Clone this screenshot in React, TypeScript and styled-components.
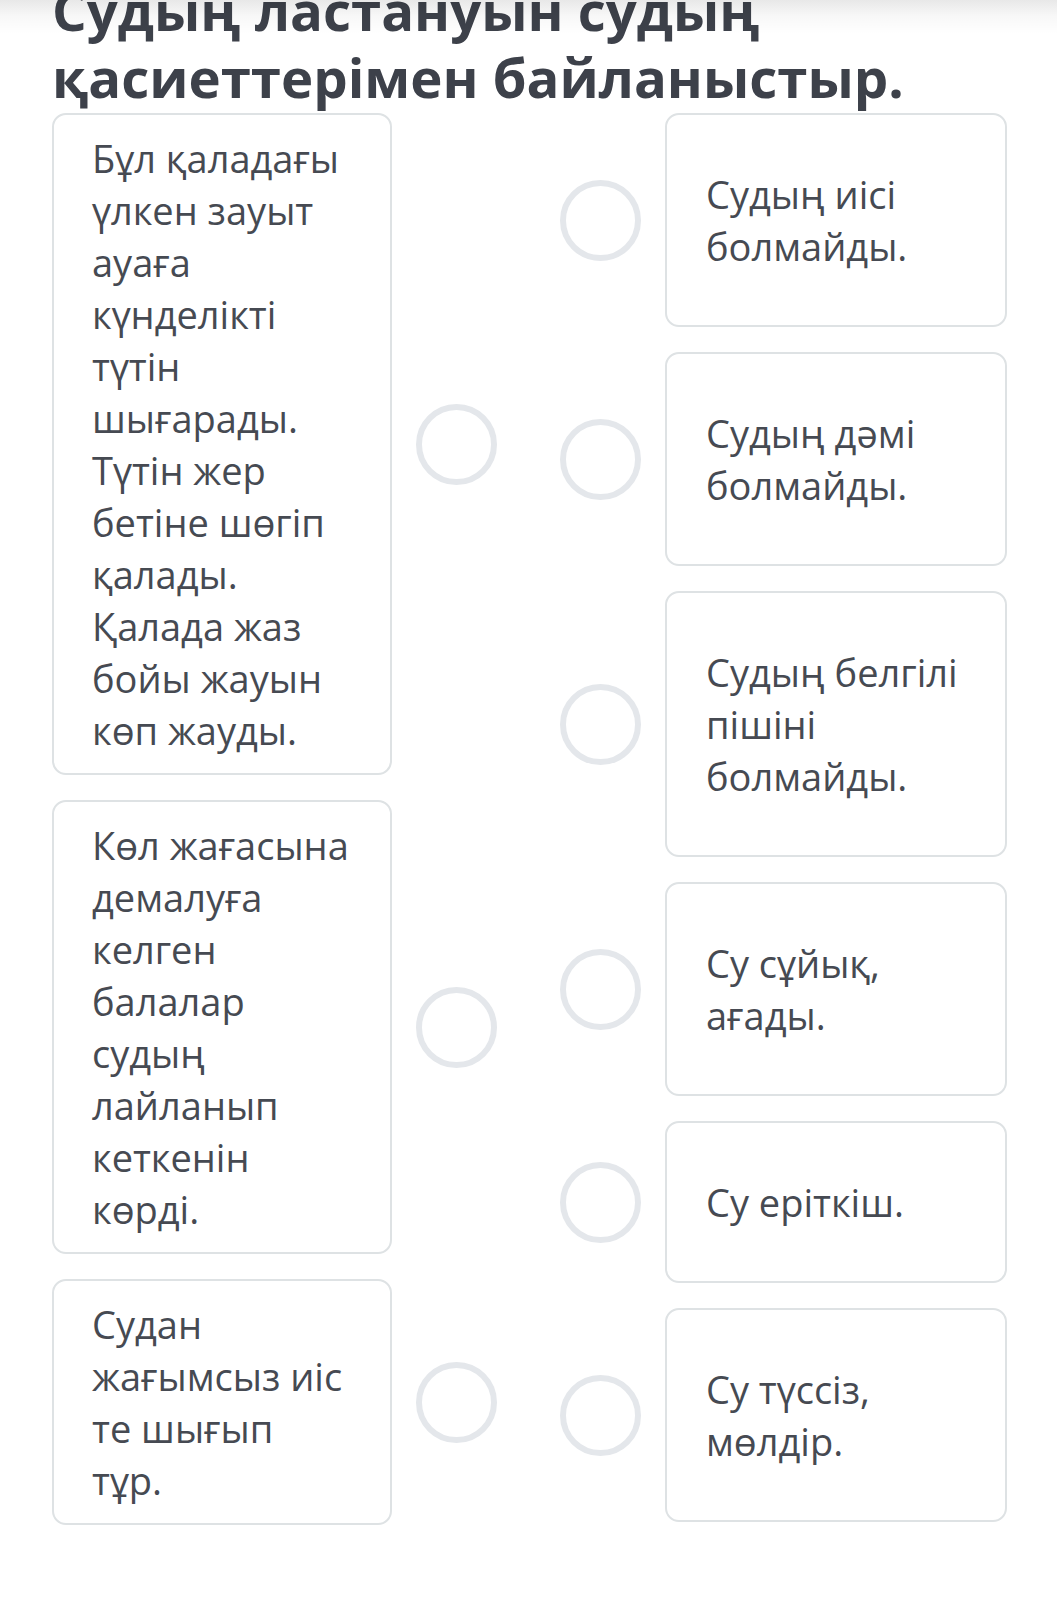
import styled, { createGlobalStyle } from 'styled-components'

const GlobalStyle = createGlobalStyle`
  html, body {
    margin: 0;
    padding: 0;
    background: #ffffff;
  }
  body {
    font-family: 'Open Sans', 'Noto Sans', sans-serif;
    color: #464a52;
    overflow: hidden;
  }
`

const Page = styled.main`
  position: relative;
  width: 1057px;
  height: 1619px;
  box-sizing: border-box;
  padding: 0 50px 0 52px;
  overflow: hidden;
`

// shadow of the sticky header that sits just above the scrolled view
const TopShade = styled.div`
  position: absolute;
  top: 0;
  left: 0;
  right: 0;
  height: 34px;
  z-index: 2;
  pointer-events: none;
  background: linear-gradient(to bottom, rgba(0, 0, 0, 0.09) 0%, rgba(0, 0, 0, 0.03) 45%, rgba(0, 0, 0, 0) 100%);
`

const Title = styled.h1`
  margin: -23px 0 2px;
  font-size: 54.5px;
  line-height: 67px;
  font-weight: 700;
  color: #3d414a;
`

const Board = styled.div`
  display: grid;
  grid-template-columns: 445px 449px;
  column-gap: 63px;
  align-items: start;
`

const Stack = styled.div`
  display: flex;
  flex-direction: column;
  gap: 25px;
`

const Pair = styled.div<{ $reverse?: boolean }>`
  display: flex;
  flex-direction: ${({ $reverse }) => ($reverse ? 'row-reverse' : 'row')};
  justify-content: ${({ $reverse }) => ($reverse ? 'flex-end' : 'flex-start')};
  align-items: center;
  gap: 24px;
`

const Card = styled.div<{ $tall?: boolean }>`
  box-sizing: border-box;
  width: ${({ $tall }) => ($tall ? '342px' : '341px')};
  padding: ${({ $tall }) => ($tall ? '53px 10px 53px 39px' : '17px 10px 17px 38px')};
  border: 2px solid #dee2e4;
  border-radius: 14px;
  background: #ffffff;
  font-size: 38px;
  line-height: 52px;
  color: #464a52;
`

const Line = styled.span`
  display: block;
  white-space: nowrap;
`

const Dot = styled.span`
  flex: none;
  box-sizing: border-box;
  width: 81px;
  height: 81px;
  border: 6px solid #e4e7eb;
  border-radius: 50%;
  background: #ffffff;
`

const PROMPTS: string[][] = [
  [
    'Бұл қаладағы',
    'үлкен зауыт',
    'ауаға',
    'күнделікті',
    'түтін',
    'шығарады.',
    'Түтін жер',
    'бетіне шөгіп',
    'қалады.',
    'Қалада жаз',
    'бойы жауын',
    'көп жауды.',
  ],
  ['Көл жағасына', 'демалуға', 'келген', 'балалар', 'судың', 'лайланып', 'кеткенін', 'көрді.'],
  ['Судан', 'жағымсыз иіс', 'те шығып', 'тұр.'],
]

const ANSWERS: string[][] = [
  ['Судың иісі', 'болмайды.'],
  ['Судың дәмі', 'болмайды.'],
  ['Судың белгілі', 'пішіні', 'болмайды.'],
  ['Су сұйық,', 'ағады.'],
  ['Су еріткіш.'],
  ['Су түссіз,', 'мөлдір.'],
]

export default function App() {
  return (
    <Page>
      <GlobalStyle />
      <TopShade aria-hidden />
      <Title>Судың ластануын судың қасиеттерімен байланыстыр.</Title>
      <Board>
        <Stack>
          {PROMPTS.map((lines) => (
            <Pair key={lines[0]}>
              <Card>
                {lines.map((l) => (
                  <Line key={l}>{l}</Line>
                ))}
              </Card>
              <Dot />
            </Pair>
          ))}
        </Stack>
        <Stack>
          {ANSWERS.map((lines) => (
            <Pair key={lines[0]} $reverse>
              <Card $tall>
                {lines.map((l) => (
                  <Line key={l}>{l}</Line>
                ))}
              </Card>
              <Dot />
            </Pair>
          ))}
        </Stack>
      </Board>
    </Page>
  )
}
